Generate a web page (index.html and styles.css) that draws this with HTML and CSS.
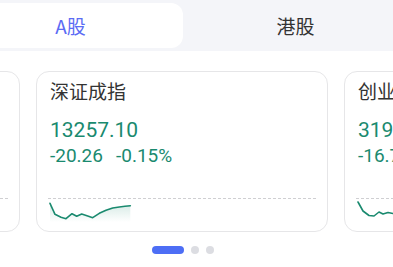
FILE: index.html
```html
<!DOCTYPE html>
<html lang="zh-CN">
<head>
<meta charset="utf-8">
<link rel="stylesheet" href="styles.css">
</head>
<body>
<div class="page">
  <div class="tabbar">
    <div class="tabs">
      <div class="tab active">A股</div>
      <div class="tab">港股</div>
    </div>
  </div>
  <div class="carousel">
    <div class="track">
      <div class="card">
        <div class="name">上证指数</div>
        <div class="price">3300.25</div>
        <div class="change"><span>-5.12</span><span>-0.16%</span></div>
        <div class="chart"><div class="baseline"></div></div>
      </div>
      <div class="card">
        <div class="name">深证成指</div>
        <div class="price">13257.10</div>
        <div class="change"><span>-20.26</span><span>-0.15%</span></div>
        <div class="chart">
          <div class="baseline"></div>
          <svg class="spark" width="84" height="24" viewBox="0 0 84 24">
            <defs>
              <linearGradient id="g1" x1="0" y1="0" x2="0" y2="1">
                <stop offset="0" stop-color="#1a8a6f" stop-opacity="0.18"/>
                <stop offset="1" stop-color="#1a8a6f" stop-opacity="0"/>
              </linearGradient>
            </defs>
            <path d="M1 5.3 L6 16.3 L12 19.3 L17 20.7 L23 15.7 L27.7 18.3 L32.7 16 L38.7 18 L43.7 19.7 L50.3 15.3 L57 12.3 L63.7 10 L70.3 9 L76 8.3 L81.3 7.7 L81.3 24 L1 24 Z" fill="url(#g1)"/>
            <path d="M1 5.3 L6 16.3 L12 19.3 L17 20.7 L23 15.7 L27.7 18.3 L32.7 16 L38.7 18 L43.7 19.7 L50.3 15.3 L57 12.3 L63.7 10 L70.3 9 L76 8.3 L81.3 7.7" fill="none" stroke="#1a8a6f" stroke-width="1.6" stroke-linejoin="round" stroke-linecap="round"/>
          </svg>
        </div>
      </div>
      <div class="card">
        <div class="name">创业板指</div>
        <div class="price">3192.46</div>
        <div class="change"><span>-16.72</span><span>-0.52%</span></div>
        <div class="chart">
          <div class="baseline"></div>
          <svg class="spark" width="84" height="24" viewBox="0 0 84 24">
            <path d="M1 4 L6 13 L12 17.5 L17 18 L22 14 L26 16 L31 14.5 L36 15.5" fill="none" stroke="#1a8a6f" stroke-width="1.6" stroke-linejoin="round" stroke-linecap="round"/>
          </svg>
        </div>
      </div>
    </div>
  </div>
  <div class="dots">
    <span class="dot on"></span>
    <span class="dot"></span>
    <span class="dot"></span>
  </div>
</div>
</body>
</html>
```

FILE: styles.css
```css
* { box-sizing: border-box; }
html, body { margin: 0; padding: 0; background: #fff; }
body { width: 393px; height: 267px; overflow: hidden; font-family: "Noto Sans CJK SC", "Noto Sans", sans-serif; }
.page { width: 393px; }
.tabbar { height: 51px; background: #f4f5f9; padding-top: 3px; overflow: hidden; }
.tabs { display: flex; margin-left: -42px; }
.tab { flex: 0 0 225px; height: 45px; display: flex; align-items: center; justify-content: center; font-size: 19px; color: #333; border-radius: 12px; }
.tab.active { background: #fff; color: #5b6cf4; }
.carousel { overflow: hidden; padding-top: 20px; }
.track { display: flex; gap: 16px; margin-left: -272px; }
.card { flex: 0 0 292px; height: 161px; border: 1px solid #e6e6e8; border-radius: 13px; padding: 5px 13px 0 13px; }
.name { font-size: 19px; color: #333; line-height: 28px; }
.price { font-family: Roboto, "Noto Sans", sans-serif; font-size: 21px; color: #1a8a6f; line-height: 26px; margin-top: 12px; }
.change { font-family: Roboto, "Noto Sans", sans-serif; font-size: 19px; color: #1a8a6f; line-height: 24px; margin-top: 1px; display: flex; gap: 13px; }
.chart { position: relative; margin-top: 30px; height: 30px; }
.baseline { border-top: 1.5px dashed #cfcfd2; margin: 0 -2px; }
.spark { position: absolute; left: -1px; top: 0; }
.dots { display: flex; justify-content: center; gap: 7px; margin-top: 14px; padding-right: 27px; }
.dot { width: 8px; height: 8px; border-radius: 4px; background: #dcdde2; }
.dot.on { width: 32px; background: #4d6ef5; }
```
